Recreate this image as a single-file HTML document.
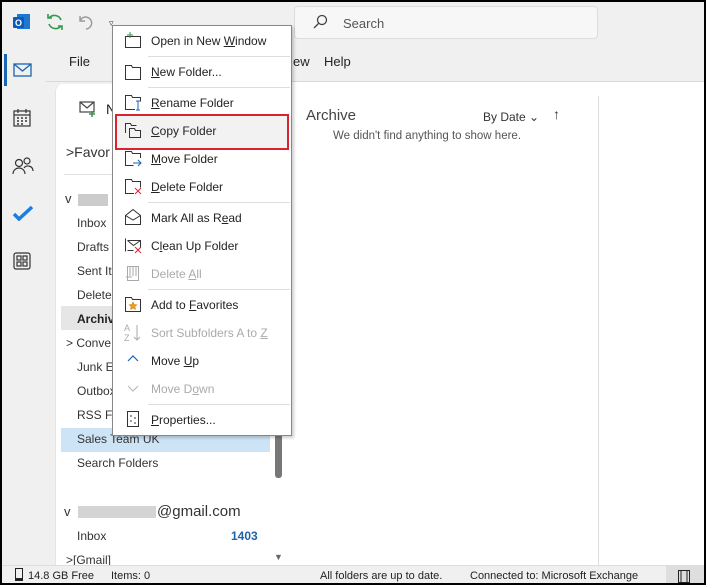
<!DOCTYPE html>
<html><head><style>
*{margin:0;padding:0;box-sizing:border-box}
body{width:706px;height:585px;overflow:hidden;font-family:"Liberation Sans",sans-serif;font-size:12px;color:#222;position:relative;background:#f0f0f0}
.a{position:absolute}
.frame{position:absolute;left:0;top:0;width:706px;height:585px;border:2px solid #000;border-bottom-width:2px;pointer-events:none;z-index:50}
.fi{position:absolute;left:77px;font-size:12px;color:#333}
.mi{position:absolute;left:151px;font-size:12px;color:#222}
.dis{color:#aaa}
.sep{position:absolute;left:148px;width:142px;height:1px;background:#ddd}
.ic{position:absolute;left:124px}
</style></head><body>
<!-- top bar -->
<svg class="a" style="left:12px;top:12px" width="20" height="20"><rect x="5" y="2" width="13" height="15" fill="#1e78d2"/><rect x="1" y="5" width="11" height="11" rx="1" fill="#0a5cb8"/><text x="3" y="14" font-size="9" fill="#fff" font-family="Liberation Sans" font-weight="bold">O</text></svg>
<svg class="a" style="left:45px;top:12px" width="20" height="20" fill="none" stroke="#2e9a4c" stroke-width="1.6"><path d="M16 8a7 7 0 0 0-12-2M4 12a7 7 0 0 0 12 2"/><path d="M3 2v4h4M17 18v-4h-4"/></svg>
<svg class="a" style="left:75px;top:12px" width="20" height="20" fill="none" stroke="#999" stroke-width="1.4"><path d="M5 4v5h5"/><path d="M5 9a6 6 0 1 1 6 8"/></svg>
<div class="a" style="left:109px;top:18px;font-size:9px;color:#444">▿</div>
<div class="a" style="left:294px;top:6px;width:304px;height:33px;background:#f7f7f7;border:1px solid #ddd;border-radius:4px"></div>
<svg class="a" style="left:312px;top:14px" width="16" height="16" fill="none" stroke="#444" stroke-width="1.3"><circle cx="10" cy="6" r="4.5"/><path d="M7 9l-5 5"/></svg>
<div class="a" style="left:343px;top:16px;font-size:13px;color:#555">Search</div>
<div class="a" style="left:69px;top:54px;font-size:13px">File</div>
<div class="a" style="left:293px;top:54px;font-size:13px">ew</div>
<div class="a" style="left:324px;top:54px;font-size:13px">Help</div>
<div class="a" style="left:46px;top:81px;width:660px;height:1px;background:#d8d8d8"></div>
<!-- left rail -->
<div class="a" style="left:4px;top:54px;width:3px;height:32px;background:#1a64b4"></div>
<svg class="a" style="left:13px;top:62px" width="20" height="16" fill="none" stroke="#1a64b4" stroke-width="1.3"><rect x="1" y="2" width="17" height="12"/><path d="M1 2l8.5 7L18 2"/></svg>
<svg class="a" style="left:13px;top:108px" width="18" height="20" fill="none" stroke="#333" stroke-width="1.2"><rect x="1" y="3" width="16" height="15"/><path d="M1 7h16M5 1v4M13 1v4"/><path d="M4 10h2M8 10h2M12 10h2M4 13h2M8 13h2M12 13h2M4 16h2M8 16h2" stroke-width="1.5"/></svg>
<svg class="a" style="left:12px;top:156px" width="22" height="20" fill="none" stroke="#333" stroke-width="1.2"><circle cx="7" cy="7" r="3.5"/><circle cx="15" cy="5" r="3"/><path d="M1 18a6 6 0 0 1 12 0M12 12a5 5 0 0 1 9 3"/></svg>
<svg class="a" style="left:12px;top:205px" width="22" height="16"><path d="M2 9l5 5 13-12" fill="none" stroke="#1a7fe0" stroke-width="3.5"/></svg>
<svg class="a" style="left:13px;top:252px" width="18" height="18" fill="none" stroke="#333" stroke-width="1.2"><rect x="1" y="1" width="16" height="16" rx="2"/><rect x="4" y="4" width="4" height="4"/><rect x="10" y="4" width="4" height="4"/><rect x="4" y="10" width="4" height="4"/><rect x="10" y="10" width="4" height="4"/></svg>
<!-- folder pane -->
<div class="a" style="left:55px;top:84px;width:236px;height:481px;background:#fff;border-top-left-radius:8px;border-left:1px solid #e4e4e4"></div>
<svg class="a" style="left:79px;top:101px" width="18" height="16" fill="none" stroke="#444" stroke-width="1.2"><rect x="1" y="1" width="14" height="10"/><path d="M1 1l7 6 7-6"/><path d="M13 10v6M10 13h6" stroke="#2e9a4c" stroke-width="1.5"/></svg>
<div class="a" style="left:106px;top:101px;font-size:14px">N</div>
<div class="a" style="left:66px;top:144px;font-size:14px;color:#333">&gt;Favor</div>
<div class="a" style="left:64px;top:174px;width:226px;height:1px;background:#e0e0e0"></div>
<div class="a" style="left:65px;top:191px;font-size:13px;color:#333">v</div>
<div class="a" style="left:78px;top:194px;width:30px;height:12px;background:#ccc"></div>
<div class="fi" style="top:216px">Inbox</div>
<div class="fi" style="top:240px">Drafts</div>
<div class="fi" style="top:264px">Sent Ite</div>
<div class="fi" style="top:288px">Deleted</div>
<div class="a" style="left:61px;top:306px;width:229px;height:24px;background:#e6e6e6"></div>
<div class="fi" style="top:312px;font-weight:bold;color:#222">Archive</div>
<div class="fi" style="top:336px;left:66px">&gt; Conve</div>
<div class="fi" style="top:360px">Junk Er</div>
<div class="fi" style="top:384px">Outbox</div>
<div class="fi" style="top:408px">RSS Fe</div>
<div class="a" style="left:61px;top:428px;width:209px;height:24px;background:#cde4f7"></div>
<div class="fi" style="top:432px">Sales Team UK</div>
<div class="fi" style="top:456px">Search Folders</div>
<div class="a" style="left:275px;top:420px;width:7px;height:58px;background:#777;border-radius:3px"></div>
<div class="a" style="left:64px;top:504px;font-size:13px;color:#333">v</div>
<div class="a" style="left:78px;top:506px;width:78px;height:12px;background:#d4d4d4"></div>
<div class="a" style="left:157px;top:503px;font-size:15px;color:#333">@gmail.com</div>
<div class="fi" style="top:529px">Inbox</div>
<div class="a" style="left:231px;top:529px;font-weight:bold;color:#1e64a8">1403</div>
<div class="fi" style="top:553px;left:66px">&gt;[Gmail]</div>
<div class="a" style="left:274px;top:552px;font-size:9px;color:#666">▼</div>
<!-- message list -->
<div class="a" style="left:291px;top:82px;width:415px;height:483px;background:#fff"></div>
<div class="a" style="left:598px;top:96px;width:1px;height:469px;background:#ddd"></div>
<div class="a" style="left:306px;top:107px;font-size:15px;color:#444">Archive</div>
<div class="a" style="left:483px;top:110px;font-size:12px;color:#333">By Date ⌄</div>
<div class="a" style="left:553px;top:106px;font-size:14px;color:#333">↑</div>
<div class="a" style="left:333px;top:130px;font-size:11.5px;color:#555">We didn't find anything to show here.</div>
<!-- status bar -->
<div class="a" style="left:0;top:565px;width:706px;height:20px;background:#f0f0f0;border-top:1px solid #ddd"></div>
<div class="a" style="left:15px;top:568px;width:8px;height:13px;border:1.2px solid #222;border-bottom-width:3px"></div>
<div class="a" style="left:28px;top:570px;font-size:11px">14.8 GB Free</div>
<div class="a" style="left:111px;top:570px;font-size:11px">Items: 0</div>
<div class="a" style="left:320px;top:570px;font-size:11px">All folders are up to date.</div>
<div class="a" style="left:470px;top:570px;font-size:11px">Connected to: Microsoft Exchange</div>
<div class="a" style="left:666px;top:566px;width:40px;height:19px;background:#dedede"></div>
<svg class="a" style="left:677px;top:569px" width="14" height="14" fill="none" stroke="#222"><rect x="1.5" y="1.5" width="11" height="12"/><path d="M4 1.5v12M10 1.5v12"/></svg>
<!-- context menu -->
<div class="a" style="left:112px;top:25px;width:180px;height:411px;background:#fff;border:1px solid #888;box-shadow:2px 2px 3px rgba(0,0,0,.2)"></div>
<div class="sep" style="top:56px"></div><div class="sep" style="top:87px"></div><div class="sep" style="top:202px"></div><div class="sep" style="top:289px"></div><div class="sep" style="top:404px"></div>
<div class="a" style="left:115px;top:114px;width:174px;height:36px;border:2px solid #d9232e;background:#f2f2f2"></div>
<svg class="ic" style="top:31px" width="18" height="18" fill="none" stroke="#333"><path d="M1.5 5.5h15v11h-15z"/><path d="M6 1v6M3 4h6" stroke="#2e9a4c"/></svg>
<div class="mi" style="top:34px">Open in New <u>W</u>indow</div>
<svg class="ic" style="top:63px" width="18" height="18" fill="none" stroke="#333"><path d="M1.5 2.5h6l1 2h8v12h-15z"/></svg>
<div class="mi" style="top:65px"><u>N</u>ew Folder...</div>
<svg class="ic" style="top:93px" width="18" height="18" fill="none" stroke="#333"><path d="M11 16.5H1.5v-14h6l1 2h8v4"/><path d="M14 8v9M12 8h4M12 17h4" stroke="#1a64b4"/></svg>
<div class="mi" style="top:96px"><u>R</u>ename Folder</div>
<svg class="ic" style="top:121px" width="18" height="18" fill="none" stroke="#333"><path d="M1.5 12V2.5h5l1 2h5"/><path d="M5.5 7.5h5l1 2h5v7h-11z"/></svg>
<div class="mi" style="top:124px"><u>C</u>opy Folder</div>
<svg class="ic" style="top:149px" width="18" height="18" fill="none" stroke="#333"><path d="M16.5 9V4.5h-8l-1-2h-6v14h8"/><path d="M9 14h8M14 11l3 3-3 3" stroke="#1a64b4"/></svg>
<div class="mi" style="top:152px"><u>M</u>ove Folder</div>
<svg class="ic" style="top:177px" width="18" height="18" fill="none" stroke="#333"><path d="M10 16.5H1.5v-14h6l1 2h8v6"/><path d="M11 11l6 6M17 11l-6 6" stroke="#d9232e"/></svg>
<div class="mi" style="top:180px"><u>D</u>elete Folder</div>
<svg class="ic" style="top:208px" width="18" height="18" fill="none" stroke="#333"><path d="M1.5 7.5l7.5-6 7.5 6v9h-15z"/><path d="M1.5 7.5L9 12l7.5-4.5"/></svg>
<div class="mi" style="top:211px">Mark All as R<u>e</u>ad</div>
<svg class="ic" style="top:236px" width="18" height="18" fill="none" stroke="#333"><path d="M1.5 2.5v13M3.5 4.5h13v7M3.5 4.5l6 5 7-5M3.5 14.5h6"/><path d="M11 11l6 6M17 11l-6 6" stroke="#d9232e"/></svg>
<div class="mi" style="top:239px">C<u>l</u>ean Up Folder</div>
<svg class="ic" style="top:264px" width="18" height="18" fill="none" stroke="#aaa"><path d="M3.5 2.5h11v14h-11z"/><path d="M6 2v10M9 2v10M12 2v10M2 13h6"/></svg>
<div class="mi dis" style="top:267px">Delete <u>A</u>ll</div>
<svg class="ic" style="top:295px" width="18" height="18" fill="none" stroke="#333"><path d="M1.5 2.5h6l1 2h8v12h-15z"/><path d="M9 7l1.2 2.6 2.6.3-2 1.8.6 2.7L9 13l-2.4 1.4.6-2.7-2-1.8 2.6-.3z" fill="#f0a020" stroke="#d08000" stroke-width=".6"/></svg>
<div class="mi" style="top:298px">Add to <u>F</u>avorites</div>
<svg class="ic" style="top:322px" width="18" height="20"><text x="0" y="9" font-size="9" fill="#aaa" font-family="Liberation Sans">A</text><text x="0" y="19" font-size="9" fill="#aaa" font-family="Liberation Sans">Z</text><path d="M13 3v15M10 15l3 3 3-3" fill="none" stroke="#aaa"/></svg>
<div class="mi dis" style="top:326px">Sort Subfolders A to <u>Z</u></div>
<svg class="ic" style="top:353px" width="18" height="12" fill="none" stroke="#1a64b4" stroke-width="1.2"><path d="M4 8l5-5 5 5"/></svg>
<div class="mi" style="top:354px">Move <u>U</u>p</div>
<svg class="ic" style="top:383px" width="18" height="12" fill="none" stroke="#bbb" stroke-width="1.2"><path d="M4 3l5 5 5-5"/></svg>
<div class="mi dis" style="top:382px">Move D<u>o</u>wn</div>
<svg class="ic" style="top:410px" width="18" height="18" fill="none" stroke="#333"><path d="M3.5 1.5h11v15h-11z"/><path d="M6 6h2M6 11h2M10 8h2M10 13h2"/></svg>
<div class="mi" style="top:413px"><u>P</u>roperties...</div>
<div class="frame"></div>
</body></html>
